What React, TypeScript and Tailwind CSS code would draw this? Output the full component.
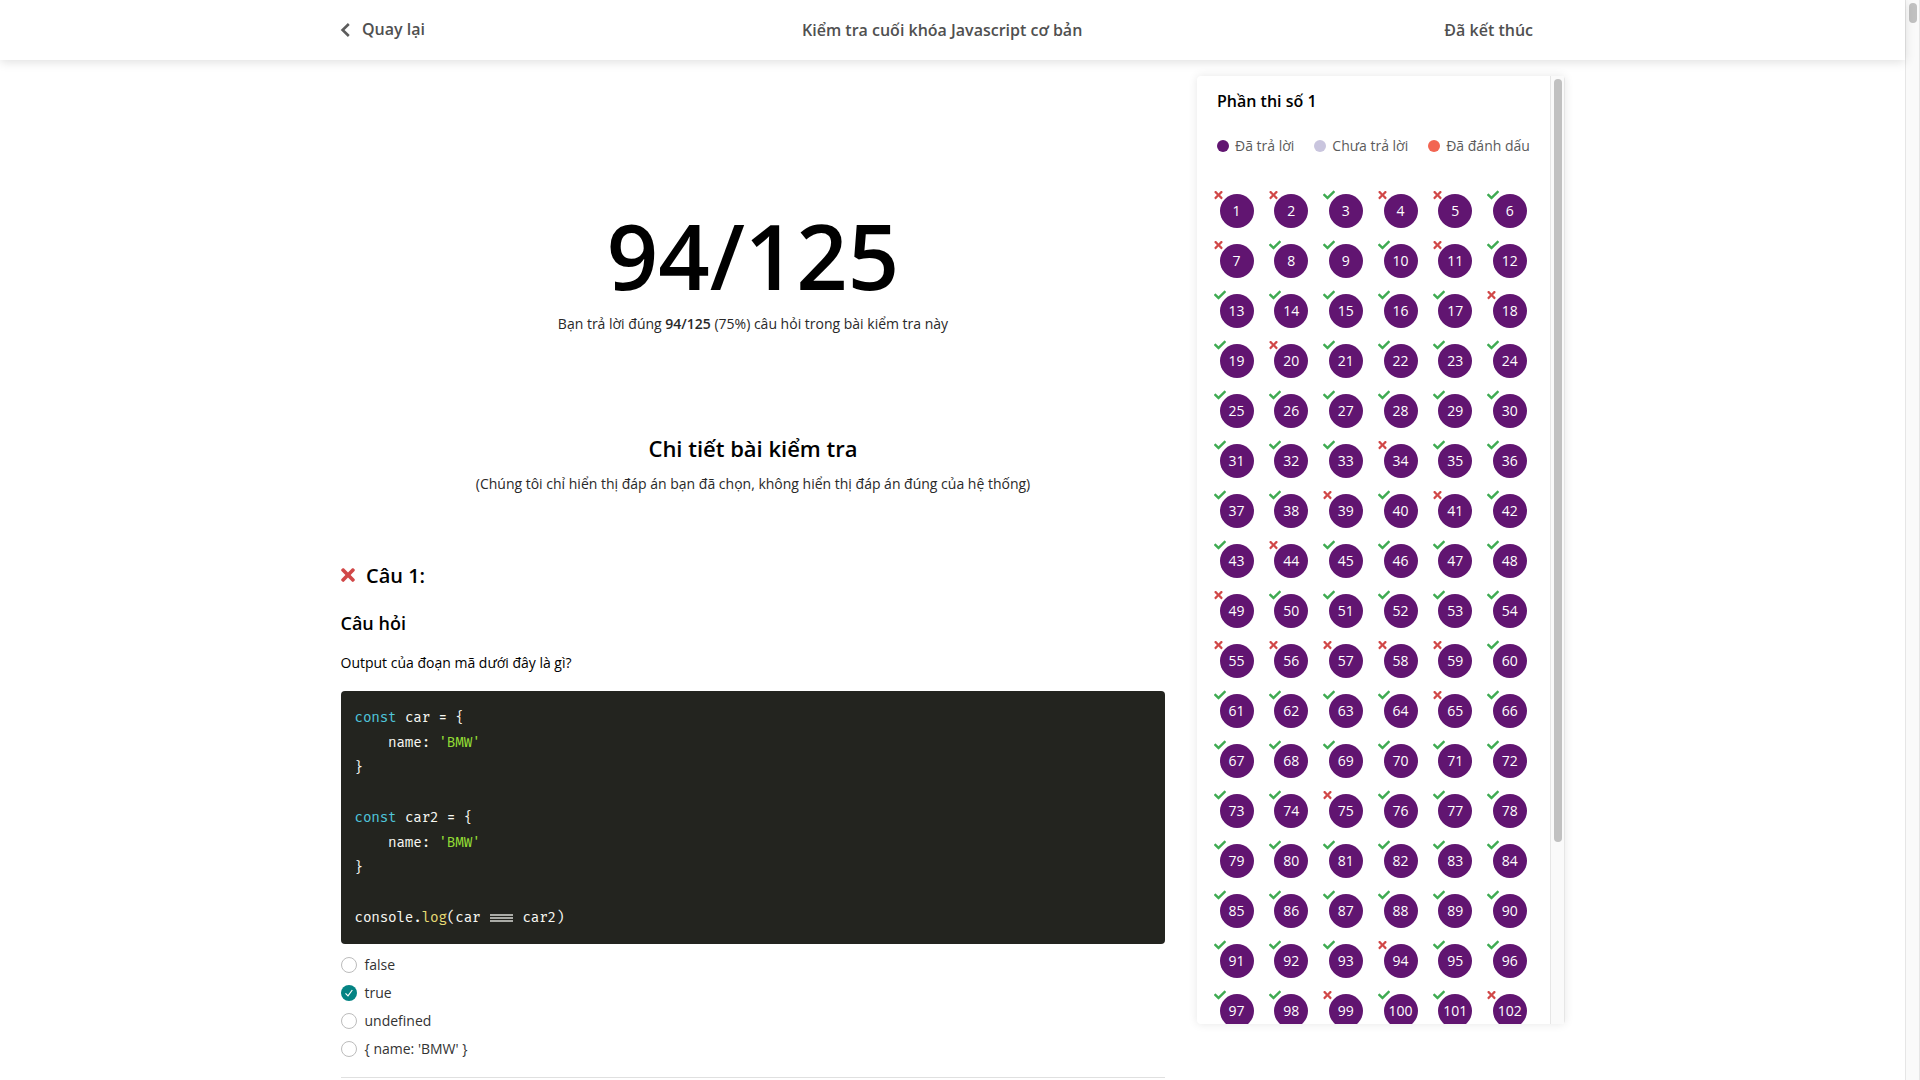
import type { ReactNode } from "react";
import { FaCheck, FaTimes } from "react-icons/fa";

const WRONG = new Set([
  1, 2, 4, 5, 7, 11, 18, 20, 34, 39, 41, 44, 49, 55, 56, 57, 58, 59, 65, 75, 94, 99, 102,
]);
const QUESTIONS = Array.from({ length: 125 }, (_, i) => i + 1);

const ANSWERS = [
  { text: "false", checked: false },
  { text: "true", checked: true },
  { text: "undefined", checked: false },
  { text: "{ name: 'BMW' }", checked: false },
];

function Header() {
  return (
    <header className="relative z-10 h-[60px] w-full shrink-0 bg-white pl-[340px] pr-[372px] text-[16px] font-semibold leading-[22px] text-[#505050] shadow-[0_2px_10px_rgba(0,0,0,0.13)]">
      <div className="flex h-full items-center justify-between">
        <div className="flex items-center">
          <svg className="h-[14px] w-[10px]" viewBox="0 0 10 14" fill="none" stroke="#5c5c5c" strokeWidth="2.6">
            <path d="M8.8 1 L2.6 7 L8.8 13" />
          </svg>
          <span className="ml-3 -mt-0.5">Quay lại</span>
        </div>
        <h1 className="ml-[15px]">Kiểm tra cuối khóa Javascript cơ bản</h1>
        <span>Đã kết thúc</span>
      </div>
    </header>
  );
}

function Keyword({ children }: { children: ReactNode }) {
  return <span className="text-[#4fc6db]">{children}</span>;
}

function Str({ children }: { children: ReactNode }) {
  return <span className="text-[#92dc35]">{children}</span>;
}

/* Triple-equals drawn as a joined ligature over its text. */
function StrictEquals() {
  return (
    <span className="relative text-transparent">
      ===
      <svg className="absolute left-[1px] top-[5px] h-[8px] w-[23px]" viewBox="0 0 23 8">
        <path d="M0 1h23M0 4h23M0 7h23" stroke="#d8d8d3" strokeWidth="1.3" />
      </svg>
    </span>
  );
}

function CodeBlock() {
  return (
    <pre
      className="mt-[17px] h-[253px] rounded-[4px] bg-[#23241f] p-[14px] text-[14px] leading-[25px] tracking-[-0.22px] text-[#f8f8f2]"
      style={{ fontFamily: '"Fira Code", "DejaVu Sans Mono", monospace' }}
    >
      <Keyword>const</Keyword>
      {" car = {\n    name: "}
      <Str>'BMW'</Str>
      {"\n}\n\n"}
      <Keyword>const</Keyword>
      {" car2 = {\n    name: "}
      <Str>'BMW'</Str>
      {"\n}\n\nconsole."}
      <span className="text-[#e6db74]">log</span>
      {"(car "}
      <StrictEquals />
      {" car2)"}
    </pre>
  );
}

function Answer({ text, checked }: { text: string; checked: boolean }) {
  return (
    <li className="flex h-7 items-center gap-2 text-[14px] leading-[22px] text-[#333]">
      {checked ? (
        <span className="flex size-4 items-center justify-center rounded-full bg-[#048383]">
          <svg className="size-4" viewBox="0 0 16 16" fill="none" stroke="#fff" strokeWidth="1.2">
            <path d="M4.5 8.3 L7 10.8 L11.3 5" />
          </svg>
        </span>
      ) : (
        <span className="size-4 rounded-full border border-[#bcbcbc]" />
      )}
      <span>{text}</span>
    </li>
  );
}

function Legend({ color, label }: { color: string; label: string }) {
  return (
    <span className="flex items-center gap-1.5">
      <span className="size-3 rounded-full" style={{ background: color }} />
      {label}
    </span>
  );
}

function QuestionPanel() {
  return (
    <aside className="mt-4 flex h-[948px] w-[368px] shrink-0 overflow-hidden rounded-[4px] bg-white shadow-[0_0_10px_rgba(0,0,0,0.1)]">
      <div className="flex-1 overflow-hidden">
        <h2 className="ml-[20.5px] mt-[14px] text-[16px] font-semibold leading-[22px] text-black">Phần thi số 1</h2>
        <div className="ml-[20.5px] mt-[23px] flex gap-5 whitespace-nowrap text-[14px] leading-[22px] text-[#5b5b5b]">
          <Legend color="#611571" label="Đã trả lời" />
          <Legend color="#c9c5de" label="Chưa trả lời" />
          <Legend color="#f26552" label="Đã đánh dấu" />
        </div>
        <div className="ml-[23px] mt-[37px] grid w-[328px] grid-cols-6 gap-y-4">
          {QUESTIONS.map((n) => (
            <div
              key={n}
              className="relative flex size-[34px] items-center justify-center rounded-full bg-[#611571] text-[14px] font-medium leading-none text-white"
            >
              {n}
              {WRONG.has(n) ? (
                <FaTimes className="absolute -left-[5.5px] -top-[5px] h-3 w-[9px] text-[#d14848]" />
              ) : (
                <FaCheck className="absolute -left-[5.5px] -top-[5px] size-3 text-[#3fab52]" />
              )}
            </div>
          ))}
        </div>
      </div>
      <div className="w-[15px] border-x border-[#e6e6e6] bg-[#fafafa] pl-[3px] pt-[3px]">
        <div className="h-[763px] w-2 rounded-full bg-[#c1c1c1]" />
      </div>
    </aside>
  );
}

export default function App() {
  return (
    <div
      className="flex h-[1080px] w-[1920px] overflow-hidden bg-white"
      style={{ fontFamily: '"Open Sans", sans-serif' }}
    >
      <div className="flex w-[1905px] flex-col">
        <Header />
        <div className="flex min-h-0 flex-1 pl-[340.5px]">
          <main className="mr-8 w-[824px] shrink-0">
            <section className="pl-px text-center">
              <div className="mt-[137px] text-[90px] font-semibold leading-[116px] text-black">94/125</div>
              <p className="text-[14px] leading-[22px] text-[#292929]">
                Bạn trả lời đúng <b className="font-semibold">94/125</b> (75%) câu hỏi trong bài kiểm tra này
              </p>
              <h2 className="mt-[98px] text-[22px] font-semibold leading-[30px] text-black">Chi tiết bài kiểm tra</h2>
              <p className="mt-[10px] text-[14px] leading-[22px] text-[#292929]">
                (Chúng tôi chỉ hiển thị đáp án bạn đã chọn, không hiển thị đáp án đúng của hệ thống)
              </p>
            </section>
            <section className="text-black">
              <h3 className="mt-[66px] flex items-center gap-[11.5px] text-[20px] font-semibold leading-[28px]">
                <FaTimes className="h-5 w-[14px] text-[#d14848]" />
                <span className="mt-px -mb-px">Câu 1:</span>
              </h3>
              <h4 className="mt-[22px] text-[18px] font-semibold leading-[24px]">Câu hỏi</h4>
              <p className="mt-[17px] text-[14px] leading-[22px]">Output của đoạn mã dưới đây là gì?</p>
              <CodeBlock />
              <ul className="mt-[7px]">
                {ANSWERS.map((a) => (
                  <Answer key={a.text} {...a} />
                ))}
              </ul>
              <hr className="mt-[14px] border-[#e0e0e0]" />
            </section>
          </main>
          <QuestionPanel />
        </div>
      </div>
      <div className="h-full w-[15px] border-x border-[#e6e6e6] bg-[#fafafa] pl-[3px] pt-[3px]">
        <div className="h-5 w-2 rounded-full bg-[#c1c1c1]" />
      </div>
    </div>
  );
}
